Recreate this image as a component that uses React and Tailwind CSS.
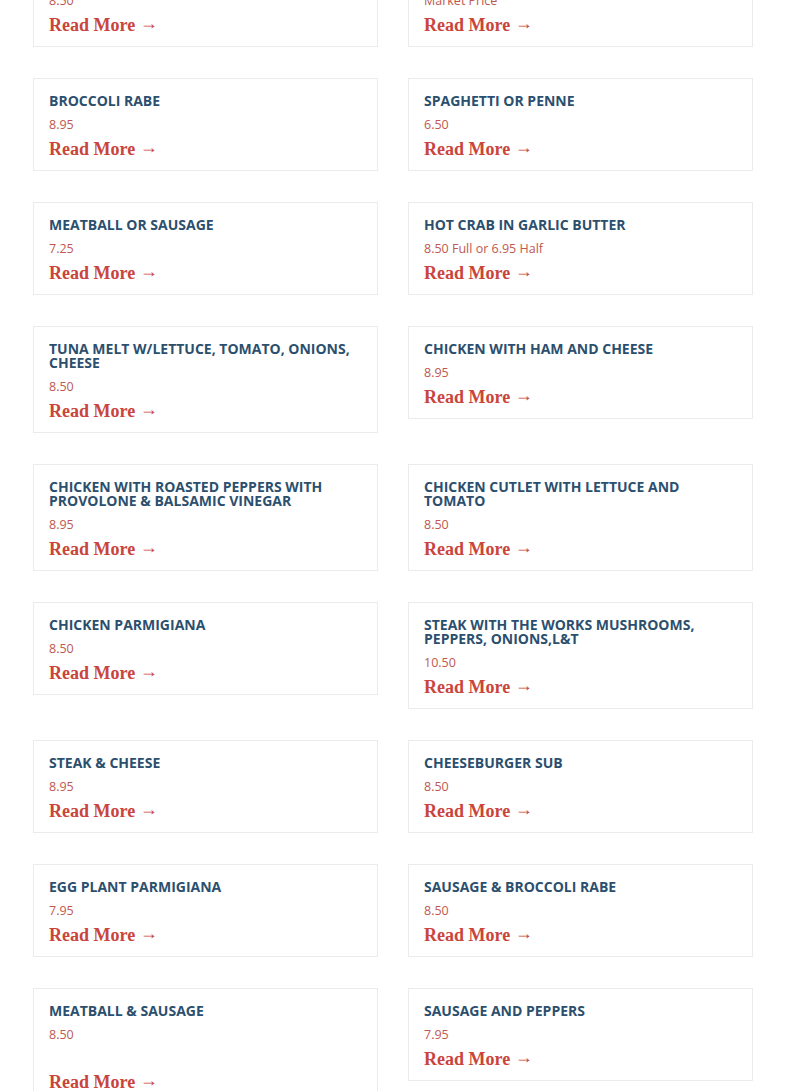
const items = [
  { name: "Shrimp Scampi", price: "8.50" },
  { name: "Fried Calamari", price: "Market Price" },
  { name: "Broccoli Rabe", price: "8.95" },
  { name: "Spaghetti or Penne", price: "6.50" },
  { name: "Meatball or Sausage", price: "7.25" },
  { name: "Hot Crab in Garlic Butter", price: "8.50 Full or 6.95 Half" },
  { name: "Tuna Melt w/Lettuce, Tomato, Onions, Cheese", price: "8.50" },
  { name: "Chicken with Ham and Cheese", price: "8.95" },
  { name: "Chicken with Roasted Peppers with Provolone & Balsamic Vinegar", price: "8.95" },
  { name: "Chicken Cutlet with Lettuce and Tomato", price: "8.50" },
  { name: "Chicken Parmigiana", price: "8.50" },
  { name: "Steak with the Works Mushrooms, Peppers, Onions,L&T", price: "10.50" },
  { name: "Steak & Cheese", price: "8.95" },
  { name: "Cheeseburger Sub", price: "8.50" },
  { name: "Egg Plant Parmigiana", price: "7.95" },
  { name: "Sausage & Broccoli Rabe", price: "8.50" },
  { name: "Meatball & Sausage", price: "8.50", extra: true },
  { name: "Sausage and Peppers", price: "7.95" },
];

export default function App() {
  return (
    <div className="h-[1091px] overflow-hidden bg-white">
      <div className="grid grid-cols-2 items-start gap-x-[30px] gap-y-[31px] pl-[33px] pr-[32px] -mt-[46px]">
        {items.map((item, i) => (
          <MenuCard key={i} {...item} />
        ))}
      </div>
    </div>
  );
}

function MenuCard({ name, price, extra }) {
  return (
    <div className="border border-[#ebebeb] bg-white px-[15px] pt-[15px] pb-[9px]">
      <h3 className="mb-[5px] font-['Open_Sans',sans-serif] text-[14px] font-bold uppercase leading-[14px] text-[#2c4f6e]">
        {name}
      </h3>
      <p className="font-['Open_Sans',sans-serif] text-[12.5px] leading-[24px] text-[#c0584f]">
        {price}
      </p>
      {extra && <div className="h-[23px]" />}
      <a
        href="#"
        className="block font-['Liberation_Serif',serif] text-[18px] font-bold leading-[24px] text-[#c9453c]"
      >
        Read More <span className="relative -top-[2px]">→</span>
      </a>
    </div>
  );
}
